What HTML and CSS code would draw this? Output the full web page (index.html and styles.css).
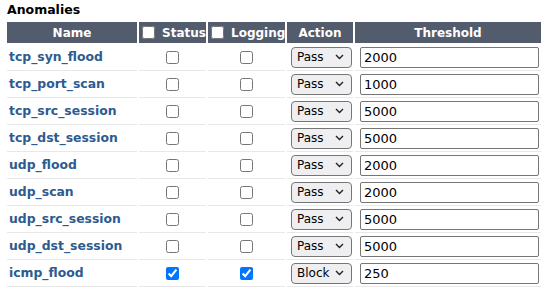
FILE: index.html
```html
<!DOCTYPE html>
<html>
  <head>
    <title>Anomalies</title>
    <link rel="stylesheet" href="styles.css">
  </head>
  <body>
    <div class="section-title">Anomalies</div>
    <table class="anomaly-table">
      <colgroup>
        <col class="col-name">
        <col class="col-status">
        <col class="col-logging">
        <col class="col-action">
        <col class="col-threshold">
      </colgroup>
      <thead>
        <tr>
          <th>Name</th>
          <th class="th-check"><input type="checkbox" class="head-check">Status</th>
          <th class="th-check"><input type="checkbox" class="head-check">Logging</th>
          <th>Action</th>
          <th>Threshold</th>
        </tr>
      </thead>
      <tbody id="rows"></tbody>
    </table>

    <script>
    let anomalies = [
      { name: "tcp_syn_flood", status: false, logging: false, action: "Pass", threshold: 2000 },
      { name: "tcp_port_scan", status: false, logging: false, action: "Pass", threshold: 1000 },
      { name: "tcp_src_session", status: false, logging: false, action: "Pass", threshold: 5000 },
      { name: "tcp_dst_session", status: false, logging: false, action: "Pass", threshold: 5000 },
      { name: "udp_flood", status: false, logging: false, action: "Pass", threshold: 2000 },
      { name: "udp_scan", status: false, logging: false, action: "Pass", threshold: 2000 },
      { name: "udp_src_session", status: false, logging: false, action: "Pass", threshold: 5000 },
      { name: "udp_dst_session", status: false, logging: false, action: "Pass", threshold: 5000 },
      { name: "icmp_flood", status: true, logging: true, action: "Block", threshold: 250 }
    ];

    function loadRows() {
      let body = document.getElementById("rows");
      body.innerHTML = anomalies.map(a => `
<tr>
  <td class="cell-name"><a href="#">${a.name}</a></td>
  <td class="cell-check"><input type="checkbox" ${a.status ? "checked" : ""}></td>
  <td class="cell-check"><input type="checkbox" ${a.logging ? "checked" : ""}></td>
  <td class="cell-action">
    <select>
      <option ${a.action == "Pass" ? "selected" : ""}>Pass</option>
      <option ${a.action == "Block" ? "selected" : ""}>Block</option>
    </select>
  </td>
  <td class="cell-threshold"><input type="text" value="${a.threshold}"></td>
</tr>`).join("");
    }

    loadRows();
    </script>
  </body>
</html>
```

FILE: styles.css
```css
* {
  box-sizing: border-box;
}
body {
  margin: 0;
  padding: 3px 5px;
  font-family: "DejaVu Sans", Verdana, sans-serif;
  font-size: 12px;
  color: #000;
  background: #fff;
}
.section-title {
  font-weight: bold;
  font-size: 12.5px;
  line-height: 14px;
  padding-left: 2px;
  margin-bottom: 5px;
}
.anomaly-table {
  border-collapse: separate;
  border-spacing: 2px 0;
  table-layout: fixed;
  width: 538px;
  font-size: 12px;
  line-height: 14px;
}
.col-name { width: 130px; }
.col-status { width: 67px; }
.col-logging { width: 77px; }
.col-action { width: 66px; }
.col-threshold { width: 186px; }
.anomaly-table th {
  background-color: #525c6d;
  color: #fff;
  font-weight: bold;
  height: 22px;
  padding: 0 2px;
  white-space: nowrap;
  overflow: hidden;
  text-align: center;
  border-bottom: 1px solid #fff;
}
.anomaly-table th.th-check {
  text-align: left;
  padding-left: 3px;
}
.head-check {
  margin: 0 7px 0 0;
  vertical-align: -2px;
  width: 13px;
  height: 13px;
}
.anomaly-table td {
  height: 27px;
  padding: 0;
  border-bottom: 1px solid #e8e8e8;
  vertical-align: middle;
}
.anomaly-table td.cell-name {
  padding-left: 2px;
}
.cell-name a {
  color: #2d5b8f;
  font-weight: bold;
  font-size: 12.4px;
  text-decoration: none;
}
.cell-check {
  text-align: center;
}
.cell-check input {
  margin: 0;
  width: 13px;
  height: 13px;
  vertical-align: middle;
}
.anomaly-table td.cell-action {
  padding-left: 4px;
}
.cell-action select {
  appearance: none;
  -webkit-appearance: none;
  font-family: "DejaVu Sans", Verdana, sans-serif;
  font-size: 12px;
  color: #000;
  width: 61px;
  height: 21px;
  margin: 0;
  padding: 0 0 0 5px;
  border: 1px solid #767676;
  border-radius: 4px;
  background-color: #efeff1;
  background-image: url("data:image/svg+xml,%3Csvg xmlns='http://www.w3.org/2000/svg' width='9' height='6' viewBox='0 0 9 6'%3E%3Cpath d='M1 1l3.5 3.5L8 1' fill='none' stroke='%23222' stroke-width='1.4'/%3E%3C/svg%3E");
  background-repeat: no-repeat;
  background-position: right 7px center;
  display: block;
}
.anomaly-table td.cell-threshold {
  padding-left: 5px;
}
.cell-threshold input {
  font-family: "DejaVu Sans", Verdana, sans-serif;
  font-size: 13px;
  color: #000;
  width: 179px;
  height: 21px;
  margin: 0;
  padding: 1px 3px;
  border: 1px solid #767676;
  border-radius: 2px;
  display: block;
}
```
